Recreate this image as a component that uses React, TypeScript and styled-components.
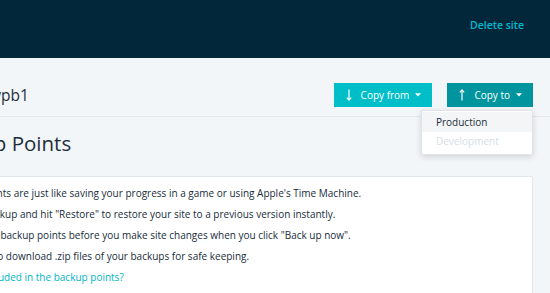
import React from 'react';
import styled, { createGlobalStyle } from 'styled-components';

const GlobalStyle = createGlobalStyle`
  html, body {
    margin: 0;
    padding: 0;
    background: #f3f6f9;
    font-family: 'Open Sans', 'Liberation Sans', sans-serif;
    overflow: hidden;
  }
`;

const Page = styled.div`
  width: 550px;
  height: 293px;
  overflow: hidden;
  background: #f3f6f9;
`;

const TopBar = styled.div`
  height: 58px;
  box-sizing: border-box;
  display: flex;
  justify-content: flex-end;
  padding: 18px 26px 0 0;
  background: #02263a;
`;

const DeleteLink = styled.a`
  font-size: 10.5px;
  font-weight: 600;
  line-height: 14px;
  color: #00bccf;
  text-decoration: none;
  cursor: pointer;
`;

const Main = styled.div`
  margin-left: -74px;
`;

const TitleRow = styled.div`
  display: flex;
  align-items: center;
  justify-content: space-between;
  padding: 25px 17px 9px 63px;
  border-bottom: 1px solid #e4e9ef;
`;

const SiteName = styled.h1`
  margin: 0;
  font-size: 15.5px;
  font-weight: 400;
  line-height: 20px;
  color: #1b2e3b;
`;

const Actions = styled.div`
  display: flex;
  gap: 15px;
`;

const MenuWrap = styled.div`
  position: relative;
`;

type ToneProps = { $tone: 'light' | 'dark' };

const CopyButton = styled.button<ToneProps>`
  display: flex;
  align-items: center;
  height: 24px;
  padding: 0 11px 0 12px;
  border: none;
  border-radius: 0;
  background: ${(p) => (p.$tone === 'light' ? '#00bec8' : '#00959e')};
  color: #ffffff;
  font-family: inherit;
  font-size: 10px;
  cursor: pointer;

  svg {
    flex-shrink: 0;
  }
`;

const Label = styled.span`
  margin: 0 6px 0 9px;
  line-height: 14px;
`;

const Menu = styled.div`
  position: absolute;
  top: 27px;
  right: 0;
  width: 112px;
  box-sizing: border-box;
  padding: 1px 0 3px;
  background: #ffffff;
  border: 1px solid #dfe3e8;
  border-radius: 2px;
  box-shadow: 0 2px 6px rgba(0, 0, 0, 0.14);
  z-index: 2;
`;

type ItemProps = { $active?: boolean; $disabled?: boolean };

const MenuItem = styled.div<ItemProps>`
  height: 19.5px;
  display: flex;
  align-items: center;
  padding: 0 14px;
  font-size: 10px;
  color: ${(p) => (p.$disabled ? '#d6dee6' : '#1b2e3b')};
  background: ${(p) => (p.$active ? '#f4f5f7' : 'transparent')};
`;

const Heading = styled.h2`
  margin: 12px 0 19px;
  padding-left: 10px;
  font-size: 20.5px;
  font-weight: 400;
  line-height: 28px;
  color: #1b2e3b;
`;

const Card = styled.div`
  margin-right: 17px;
  padding: 6px 18px 40px;
  background: #ffffff;
  border: 1px solid #e2e7ec;
  border-radius: 2px;
`;

const Line = styled.p`
  margin: 0;
  font-size: 10px;
  line-height: 21px;
  color: #172c3a;
  white-space: nowrap;
`;

const HelpLink = styled.a`
  display: block;
  font-size: 10px;
  line-height: 21px;
  color: #00b5c6;
  text-decoration: none;
  white-space: nowrap;
`;

const Arrow = ({ up }: { up?: boolean }) => (
  <svg width="6" height="12" viewBox="0 0 6 12" fill="none" stroke="#ffffff" strokeWidth="1.2">
    {up ? (
      <>
        <line x1="3" y1="1" x2="3" y2="11.5" />
        <polyline points="0.8,3.4 3,0.9 5.2,3.4" />
      </>
    ) : (
      <>
        <line x1="3" y1="0.5" x2="3" y2="11" />
        <polyline points="0.8,8.6 3,11.1 5.2,8.6" />
      </>
    )}
  </svg>
);

const Caret = () => (
  <svg width="6" height="4" viewBox="0 0 6 4">
    <polygon points="0,0.3 6,0.3 3,3.5" fill="#ffffff" />
  </svg>
);

const App = () => {
  return (
    <Page>
      <GlobalStyle />
      <TopBar>
        <DeleteLink>Delete site</DeleteLink>
      </TopBar>
      <Main>
        <TitleRow>
          <SiteName>wpb1</SiteName>
          <Actions>
            <CopyButton $tone="light">
              <Arrow />
              <Label>Copy from</Label>
              <Caret />
            </CopyButton>
            <MenuWrap>
              <CopyButton $tone="dark">
                <Arrow up />
                <Label>Copy to</Label>
                <Caret />
              </CopyButton>
              <Menu>
                <MenuItem $active>Production</MenuItem>
                <MenuItem $disabled>Development</MenuItem>
              </Menu>
            </MenuWrap>
          </Actions>
        </TitleRow>
        <Heading>Backup Points</Heading>
        <Card>
          <Line>Backup points are just like saving your progress in a game or using Apple's Time Machine.</Line>
          <Line>Select a backup and hit "Restore" to restore your site to a previous version instantly.</Line>
          <Line>Create new backup points before you make site changes when you click "Back up now".</Line>
          <Line>You can also download .zip files of your backups for safe keeping.</Line>
          <HelpLink>What is included in the backup points?</HelpLink>
        </Card>
      </Main>
    </Page>
  );
};

export default App;
